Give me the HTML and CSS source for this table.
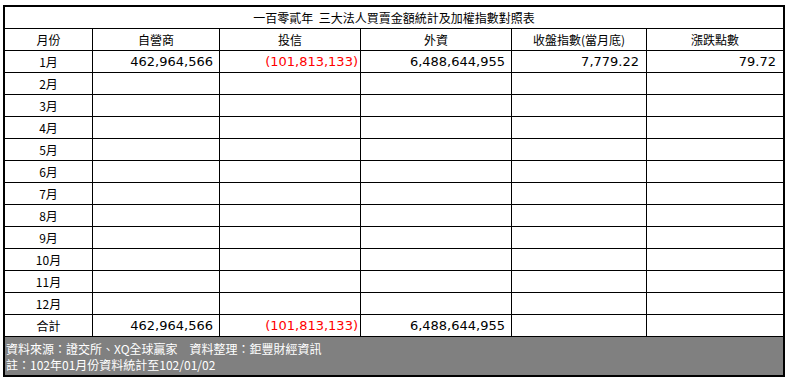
FILE: index.html
```html
<!DOCTYPE html>
<html lang="zh-Hant">
<head>
<meta charset="utf-8">
<title>一百零貳年 三大法人買賣金額統計及加權指數對照表</title>
<link rel="stylesheet" href="styles.css">
</head>
<body>
<table class="report">
  <colgroup>
    <col class="c1"><col class="c2"><col class="c3"><col class="c4"><col class="c5"><col class="c6">
  </colgroup>
  <thead>
    <tr class="title-row"><th colspan="6">一百零貳年&nbsp;&nbsp;三大法人買賣金額統計及加權指數對照表</th></tr>
    <tr class="head-row"><th>月份</th><th>自營商</th><th>投信</th><th>外資</th><th>收盤指數(當月底)</th><th class="last">漲跌點數</th></tr>
  </thead>
  <tbody>
    <tr><td class="mon">1月</td><td class="num">462,964,566</td><td class="num neg">(101,813,133)</td><td class="num">6,488,644,955</td><td class="num idx">7,779.22</td><td class="num idx last">79.72</td></tr>
    <tr><td class="mon">2月</td><td></td><td></td><td></td><td></td><td class="last"></td></tr>
    <tr><td class="mon">3月</td><td></td><td></td><td></td><td></td><td class="last"></td></tr>
    <tr><td class="mon">4月</td><td></td><td></td><td></td><td></td><td class="last"></td></tr>
    <tr><td class="mon">5月</td><td></td><td></td><td></td><td></td><td class="last"></td></tr>
    <tr><td class="mon">6月</td><td></td><td></td><td></td><td></td><td class="last"></td></tr>
    <tr><td class="mon">7月</td><td></td><td></td><td></td><td></td><td class="last"></td></tr>
    <tr><td class="mon">8月</td><td></td><td></td><td></td><td></td><td class="last"></td></tr>
    <tr><td class="mon">9月</td><td></td><td></td><td></td><td></td><td class="last"></td></tr>
    <tr><td class="mon">10月</td><td></td><td></td><td></td><td></td><td class="last"></td></tr>
    <tr><td class="mon">11月</td><td></td><td></td><td></td><td></td><td class="last"></td></tr>
    <tr><td class="mon">12月</td><td></td><td></td><td></td><td></td><td class="last"></td></tr>
    <tr><td class="mon">合計</td><td class="num">462,964,566</td><td class="num neg">(101,813,133)</td><td class="num">6,488,644,955</td><td></td><td class="last"></td></tr>
  </tbody>
  <tfoot>
    <tr><td colspan="6" class="note"><div class="note-line">資料來源：證交所、XQ全球贏家　資料整理：鉅豐財經資訊</div><div class="note-line">註：102年01月份資料統計至102/01/02</div></td></tr>
  </tfoot>
</table>
</body>
</html>
```
FILE: styles.css
```css
html, body {
  margin: 0;
  padding: 0;
  background: #ffffff;
}

body {
  padding: 5px 0 0 3px;
  font-family: "Noto Sans CJK TC", "Noto Sans CJK SC", sans-serif;
  font-size: 12px;
  color: #000;
}

.report {
  border-collapse: separate;
  border-spacing: 0;
  table-layout: fixed;
  width: 782px;
  border: 2px solid #000;
}

.c1 { width: 88px; }
.c2 { width: 127px; }
.c3 { width: 141px; }
.c4 { width: 151px; }
.c5 { width: 135px; }
.c6 { width: 136px; }

.report th,
.report td {
  box-sizing: border-box;
  height: 22px;
  padding: 0;
  border-right: 1px solid #000;
  border-bottom: 1px solid #000;
  font-weight: normal;
  text-align: center;
  vertical-align: middle;
  line-height: 14px;
  white-space: nowrap;
}

.report .last { border-right: none; }
.report .title-row th { border-right: none; }

.report td.num {
  text-align: right;
  padding-right: 6px;
  font-family: "DejaVu Sans", Verdana, sans-serif;
  font-size: 13px;
  color: #000;
}

.report td.neg {
  color: #ff0000;
  padding-right: 2px;
}

.report td.idx { padding-right: 7px; }

.report td.note {
  border: none;
  height: auto;
  background: #808080;
  color: #fff;
  text-align: left;
  padding: 4px 0 2px 1px;
}

.note-line {
  height: 16px;
  line-height: 16px;
}
```
